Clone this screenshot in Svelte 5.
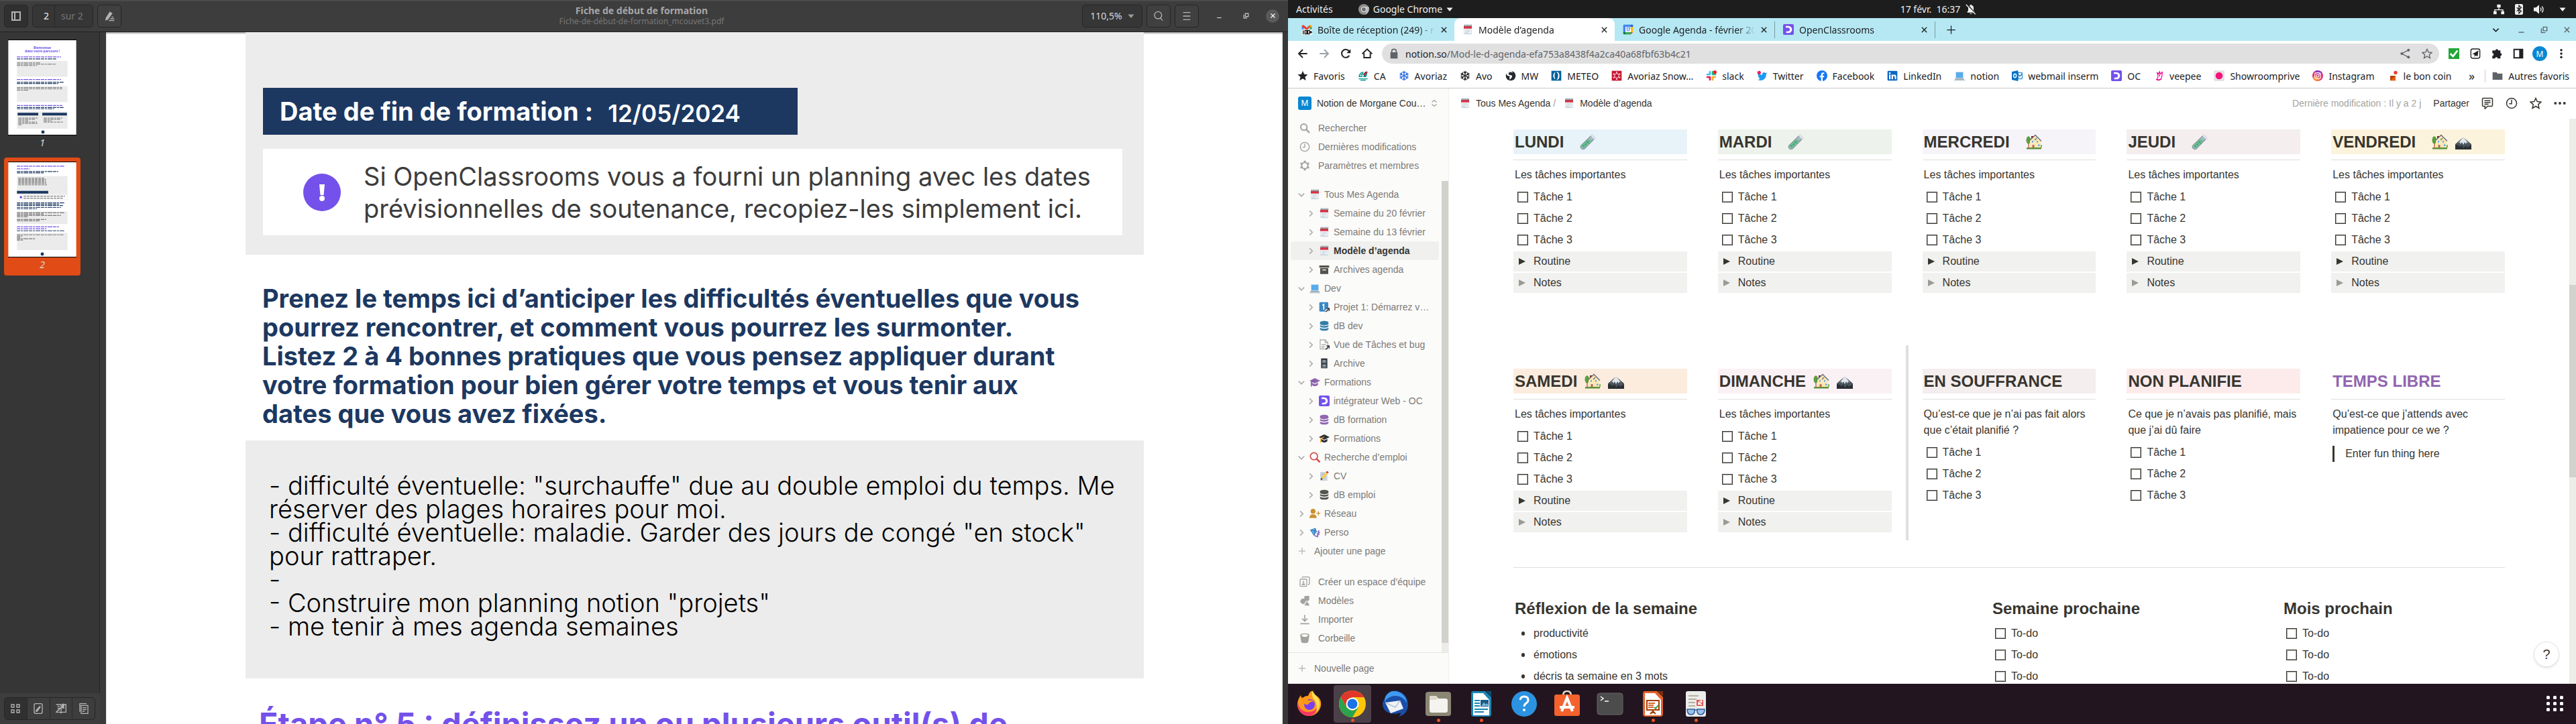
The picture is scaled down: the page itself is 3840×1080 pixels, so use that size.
<script lang="ts">
  const bookmarks = [
    { icon: 'starfull', label: 'Favoris' },
    { icon: 'ca', label: 'CA' },
    { icon: 'snow', label: 'Avoriaz' },
    { icon: 'snowdark', label: 'Avo' },
    { icon: 'globe', label: 'MW' },
    { icon: 'meteo', label: 'METEO' },
    { icon: 'avoriaz', label: 'Avoriaz Snow…' },
    { icon: 'slack', label: 'slack' },
    { icon: 'twitter', label: 'Twitter' },
    { icon: 'facebook', label: 'Facebook' },
    { icon: 'linkedin', label: 'LinkedIn' },
    { icon: 'laptop', label: 'notion' },
    { icon: 'outlook', label: 'webmail inserm' },
    { icon: 'oc', label: 'OC' },
    { icon: 'veepee', label: 'veepee' },
    { icon: 'showroom', label: 'Showroomprive' },
    { icon: 'instagram', label: 'Instagram' },
    { icon: 'lbc', label: 'le bon coin' },
  ];

  const tabs = [
    { icon: 'gmail', label: 'Boîte de réception (249) - morgane', active: false },
    { icon: 'calendar', label: 'Modèle d’agenda', active: true },
    { icon: 'gcal', label: 'Google Agenda - février 2023', active: false },
    { icon: 'oc', label: 'OpenClassrooms', active: false },
  ];

  const tree = [
    { level: 0, open: true, icon: 'calendar', label: 'Tous Mes Agenda' },
    { level: 1, open: false, icon: 'calendar', label: 'Semaine du 20 février' },
    { level: 1, open: false, icon: 'calendar', label: 'Semaine du 13 février' },
    { level: 1, open: false, icon: 'calendar', label: 'Modèle d’agenda', selected: true },
    { level: 1, open: false, icon: 'archive', label: 'Archives agenda' },
    { level: 0, open: true, icon: 'laptop', label: 'Dev' },
    { level: 1, open: false, icon: 'project', label: 'Projet 1: Démarrez votre formation' },
    { level: 1, open: false, icon: 'dbblue', label: 'dB dev' },
    { level: 1, open: false, icon: 'doclink', label: 'Vue de Tâches et bug' },
    { level: 1, open: false, icon: 'cabinet', label: 'Archive' },
    { level: 0, open: true, icon: 'cappurple', label: 'Formations' },
    { level: 1, open: false, icon: 'oc', label: 'intégrateur Web - OC' },
    { level: 1, open: false, icon: 'dbpurple', label: 'dB formation' },
    { level: 1, open: false, icon: 'capdark', label: 'Formations' },
    { level: 0, open: true, icon: 'loupered', label: 'Recherche d’emploi' },
    { level: 1, open: false, icon: 'memo', label: 'CV' },
    { level: 1, open: false, icon: 'dbdark', label: 'dB emploi' },
    { level: 0, open: false, icon: 'useradd', label: 'Réseau' },
    { level: 0, open: false, icon: 'kite', label: 'Perso' },
  ];

  const tasks = ['Tâche 1', 'Tâche 2', 'Tâche 3'];

  const week = [
    { id: 'lundi', name: 'LUNDI', tone: 'blue', emojis: ['tube'], wide: true },
    { id: 'mardi', name: 'MARDI', tone: 'green', emojis: ['tube'], wide: true },
    { id: 'mercredi', name: 'MERCREDI', tone: 'violet', emojis: ['house'], wide: true },
    { id: 'jeudi', name: 'JEUDI', tone: 'brown', emojis: ['tube'], wide: true },
    { id: 'vendredi', name: 'VENDREDI', tone: 'yellow', emojis: ['house', 'mount'], wide: true },
  ];

  const weekend = [
    { id: 'samedi', name: 'SAMEDI', tone: 'orange', emojis: ['house', 'mount'], intro: ['Les tâches importantes'], toggles: true },
    { id: 'dimanche', name: 'DIMANCHE', tone: 'pink', emojis: ['house', 'mount'], intro: ['Les tâches importantes'], toggles: true },
    { id: 'souffrance', name: 'EN SOUFFRANCE', tone: 'brown', emojis: [], intro: ['Qu’est-ce que je n’ai pas fait alors', 'que c’était planifié ?'], toggles: false },
    { id: 'nonplan', name: 'NON PLANIFIE', tone: 'red', emojis: [], intro: ['Ce que je n’avais pas planifié, mais', 'que j’ai dû faire'], toggles: false },
  ];

  const dock = [
    { icon: 'firefox', label: 'Firefox', running: false, active: false },
    { icon: 'chrome', label: 'Chrome', running: true, active: true },
    { icon: 'thunderbird', label: 'Thunderbird', running: false, active: false },
    { icon: 'files', label: 'Fichiers', running: true, active: false },
    { icon: 'writer', label: 'Writer', running: true, active: false },
    { icon: 'help', label: 'Aide', running: false, active: false },
    { icon: 'software', label: 'Logiciels', running: false, active: false },
    { icon: 'terminal', label: 'Terminal', running: false, active: false },
    { icon: 'impress', label: 'Impress', running: true, active: false },
    { icon: 'evince', label: 'Visionneur', running: true, active: false },
  ];

  const flakes = [0, 60, 120, 180, 240, 300];
  const thumbOne = [
    { y: 25, w: 66, c: '#7451eb' }, { y: 28, w: 60, c: '#1c3861' },
    { y: 59, w: 66, c: '#7451eb' }, { y: 63, w: 70, c: '#1c3861' }, { y: 65, w: 62, c: '#1c3861' },
    { y: 98, w: 68, c: '#7451eb' }, { y: 101, w: 70, c: '#1c3861' }, { y: 103, w: 56, c: '#1c3861' },
    { y: 34, w: 36, c: '#777' }, { y: 36, w: 58, c: '#777' }, { y: 38, w: 30, c: '#777' },
    { y: 71, w: 68, c: '#777' }, { y: 73, w: 68, c: '#777' }, { y: 75, w: 18, c: '#777' },
  ];
  const thumbTwo = [
    { y: 6, w: 71, c: '#7451eb' }, { y: 10, w: 19, c: '#7451eb' }, { y: 14, w: 62, c: '#1c3861' }, { y: 16, w: 40, c: '#1c3861' },
    { y: 61, w: 71, c: '#1c3861' }, { y: 63, w: 64, c: '#1c3861' }, { y: 65, w: 69, c: '#1c3861' }, { y: 68, w: 66, c: '#1c3861' }, { y: 70, w: 30, c: '#1c3861' },
    { y: 76, w: 71, c: '#777' }, { y: 78, w: 40, c: '#777' }, { y: 80, w: 66, c: '#777' }, { y: 82, w: 16, c: '#777' }, { y: 86, w: 44, c: '#777' }, { y: 88, w: 34, c: '#777' },
    { y: 97, w: 64, c: '#7451eb' }, { y: 100, w: 44, c: '#7451eb' }, { y: 103, w: 72, c: '#1c3861' },
    { y: 109, w: 70, c: '#777' }, { y: 111, w: 8, c: '#777' }, { y: 113, w: 6, c: '#777' }, { y: 115, w: 28, c: '#777' }, { y: 117, w: 9, c: '#777' },
  ];
</script>

{#snippet db(color: string)}
  <path fill={color} d="M12 1c5.500 0 9.500 1.500 9.500 3.700v2.600C21.500 9.500 17.500 11 12 11S2.500 9.500 2.500 7.300V4.700C2.500 2.500 6.500 1 12 1zM2.500 10c2 1.700 5.500 2.500 9.500 2.500s7.500-.8 9.500-2.500v2.500c0 2.200-4 4-9.500 4s-9.500-1.800-9.500-4zM2.500 16c2 1.700 5.500 2.500 9.500 2.500s7.500-.8 9.500-2.500v3c0 2.400-4 4-9.500 4s-9.500-1.600-9.500-4z" />
{/snippet}

{#snippet cap(main: string, tassel: string)}
  <path fill={main} d="M12 3 24 9l-12 6L0 9zM5 13l7 4 7-4v5c-2 2.500-4.500 3-7 3s-5-.5-7-3z" />
  <path stroke={tassel} stroke-width="2" fill="none" d="M12 9 4 12v10" />
{/snippet}

{#snippet icon(name: string)}
  <svg class="ic" viewBox="0 0 24 24" aria-hidden="true">
    {#if name === 'calendar'}
      <path fill="#ccd6dd" d="M3 5h18v15a3 3 0 0 1-3 3H6a3 3 0 0 1-3-3z" />
      <path fill="#f5f8fa" d="M4 10h16v10H4z" />
      <path fill="#ccd6dd" d="M6 12h12v2H6zM6 15h12v2H6zM6 18h7v2H6z" />
      <path fill="#dd2e44" d="M3 4h18v6H3z" />
      <path stroke="#66757f" stroke-width="1.500" d="M5 1v5M8 1v5M11 1v5M14 1v5M17 1v5M20 1v5" />
    {:else if name === 'gmail'}
      <path fill="#4285f4" d="M1 4h4v10H1z" /><path fill="#34a853" d="M19 4h4v10h-4z" />
      <path fill="#ea4335" d="m1 3 4-1 7 6 7-6 4 2-11 9L1 6z" /><path fill="#fbbc04" d="M19 2c3-1 4 1 4 3l-4 3z" />
      <path fill="#fff" d="M1 12h23v12H1z" />
      <path stroke="#111" stroke-width="2" fill="none" d="M4 14v9M8 14h4v8H8zM14 14h4v8h-4zM18 18h6M21 15v6" />
    {:else if name === 'gcal'}
      <path fill="#4285f4" d="M1 3q0-2 2-2h15v5H6v12H1z" /><path fill="#1967d2" d="M18 1h3q2 0 2 2v3h-5z" />
      <path fill="#fbbc04" d="M18 6h5v12h-5z" /><path fill="#34a853" d="M6 18h12v5H6z" />
      <path fill="#188038" d="M1 18h5v5H3q-2 0-2-2z" /><path fill="#ea4335" d="M18 18h5l-5 5z" /><path fill="#fff" d="M6 6h12v12H6z" />
      <path stroke="#4285f4" stroke-width="1.800" fill="none" d="m8 9 2-1v8M12 8h4l-3 8" />
    {:else if name === 'oc'}
      <rect width="24" height="24" rx="3" fill="#7451eb" />
      <path fill="#fff" d="M6 4h6a8 8 0 0 1 0 16H7v-4h4a4 4 0 0 0 0-8H6z" />
    {:else if name === 'starfull'}
      <path fill="#202124" d="m12 1 3.200 7.500 8 .7-6.100 5.300 1.900 7.900-7-4.200-7 4.200 1.900-7.900L.8 9.200l8-.7z" />
    {:else if name === 'ca'}
      <path fill="#00958f" d="M2 15q1-12 11-12L10 15zM12 15l4-12h6l-3 12z" /><path fill="#d4142a" d="m12 8 8-6 2 2-8 8z" />
      <path stroke="#fff" stroke-width="1.500" fill="none" d="M10 6q-5 1-4 7l5-3" /><path stroke="#00958f" stroke-width="2" d="M2 19h20M6 22h12" />
    {:else if name === 'snow' || name === 'snowdark'}
      {#each flakes as a}
        <path transform="rotate({a} 12 12)" stroke={name === 'snow' ? '#2f6fe4' : '#222'} stroke-width="2" fill="none" d="M12 12V1M8.500 3l3.500 3.500L15.500 3" />
      {/each}
    {:else if name === 'globe'}
      <circle cx="12" cy="12" r="11" fill="#26282c" /><path fill="#fff" d="M17 5q-9-3-10 2 0 3 6 4 4 1 1 5-2 3-4 5l-1-6 2-2-6-1-3-4 1-3q4-6 12-3z" />
    {:else if name === 'meteo'}
      <path fill="#00609c" d="M1 1h22v22H1z" /><path fill="#fff" d="M12 3q7 0 7 9t-7 9q4-3 4-9t-4-9zM10 4q-5 2-5 8t5 8q-2-3-2-8t2-8z" />
    {:else if name === 'avoriaz'}
      <path fill="#c8102e" d="M1 1h22v22H1z" /><circle cx="12" cy="12" r="5" fill="none" stroke="#fff" stroke-width="1.300" />
      {#each flakes as a}<path transform="rotate({a} 12 12)" stroke="#fff" stroke-width="1.300" d="M12 7V3M10 4h4" />{/each}
    {:else if name === 'slack'}
      <g stroke-width="4" stroke-linecap="round" fill="none"><path stroke="#36c5f0" d="M9 3v6M3 9h6" /><path stroke="#2eb67d" d="M15 3v6M15 9h6" /><path stroke="#ecb22e" d="M15 15h6M15 15v6" /><path stroke="#e01e5a" d="M3 15h6M9 15v6" /></g>
      <circle cx="20" cy="4" r="4" fill="#e8262d" />
    {:else if name === 'twitter'}
      <path fill="#1d9bf0" d="M23 6.500c-.9.400-1.700.6-2.600.8q1.400-1 2-2.500-1.300.8-2.900 1.100a4.500 4.500 0 0 0-7.700 4.100Q6.200 9.700 2.600 5.500c-1.300 2.300-.6 4.800 1.400 6L2 11c0 2.200 1.500 4 3.600 4.500l-2 .1c.6 1.800 2.200 3 4.200 3.100A9 9 0 0 1 1 20.500C12 26 21 19 20.700 9z" />
      <circle cx="5" cy="5" r="4" fill="#e91e63" />
    {:else if name === 'facebook'}
      <circle cx="12" cy="12" r="12" fill="#1877f2" /><path fill="#fff" d="M10 24v-8.500H7V12h3V9.500Q10 5 14.500 5H17v3h-1.700Q13.500 8 13.500 10v2H17l-.6 3.500h-2.900V24z" />
    {:else if name === 'linkedin'}
      <rect x="1" y="1" width="22" height="22" rx="2" fill="#0a66c2" /><path fill="#fff" d="M4.500 9.500h3.300V20H4.500zM4.300 4.500h3.600v3.400H4.300zM10 9.500h3.200v1.600q1-1.800 3.300-1.800 4 0 4 4.700v6h-3.300v-5.500q0-2.300-1.800-2.300-2 0-2 2.500V20H10z" />
    {:else if name === 'laptop'}
      <rect x="3" y="3" width="18" height="15" rx="1" fill="#ccd6dd" /><path fill="#55acee" d="M4.500 4.500h15v12h-15z" /><path fill="#99aab5" d="m3 18-3 5h24l-3-5z" /><path fill="#ccd6dd" d="M1 21h22v2H1z" />
    {:else if name === 'outlook'}
      <path fill="#0072c6" d="M0 3 14 0v24L0 21z" /><path fill="#fff" stroke="#0072c6" stroke-width="1.500" d="M14 5h9v14h-9z" /><path d="m15 10 3 3 5-5" stroke="#0072c6" stroke-width="2" fill="none" />
      <ellipse cx="7" cy="12" rx="3" ry="4" fill="none" stroke="#fff" stroke-width="2.200" />
    {:else if name === 'veepee'}
      <path fill="none" stroke="#ec008c" stroke-width="1.800" d="M8 4c3 6 3 12 0 16 5 3 10 0 11-6l1-10-5 4-1-5-3 5zM14 8v6" /><path stroke="#ec008c" stroke-width="1.800" d="M6 20q6 4 12-1" fill="none" />
    {:else if name === 'showroom'}
      <rect width="24" height="24" rx="3" fill="#e3e3e3" /><circle cx="12" cy="12" r="8" fill="#f9127b" />
    {:else if name === 'instagram'}
      <circle cx="12" cy="12" r="12" fill="#e1306c" /><path fill="#fd8d32" d="M1 16a12 12 0 0 0 17 6L6 12z" /><path fill="#8a3ac8" d="M5 2a12 12 0 0 1 17 4L12 9z" />
      <rect x="5.500" y="5.500" width="13" height="13" rx="4" stroke="#fff" stroke-width="1.700" fill="none" /><circle cx="12" cy="12" r="3" stroke="#fff" stroke-width="1.700" fill="none" /><circle cx="15.700" cy="8.300" r="1" fill="#fff" />
    {:else if name === 'lbc'}
      <path fill="#ec6113" d="M6 12h12v11H6z" /><path fill="#8a3708" d="m18 12-12 11V12z" opacity=".6" /><circle cx="18" cy="5" r="4" fill="#e63c2e" />
    {:else if name === 'folder'}
      <path fill="#5f6368" d="M1 4h9l2 3h11v14H1z" />
    {:else if name === 'archive'}
      <path fill="#55534e" d="M1 3h22v5H1zM3 9h18v13H3z" /><path fill="#fbfbfa" d="M8 12h8v2H8z" />
    {:else if name === 'project'}
      <rect x="1" y="1" width="20" height="21" rx="2" fill="#3b88c3" /><path stroke="#fff" stroke-width="2.500" fill="none" d="m8 8 3-2v12" /><path stroke="#fff" stroke-width="5" d="m15 22 8-8" /><path stroke="#333" stroke-width="2" fill="none" d="m15 23 7-7M17 15h6v6" />
    {:else if name === 'dbblue'}{@render db('#337ea9')}
    {:else if name === 'dbpurple'}{@render db('#9065b0')}
    {:else if name === 'dbdark'}{@render db('#55534e')}
    {:else if name === 'doclink'}
      <path fill="#fff" stroke="#b0aeaa" stroke-width="2" d="M3 1.500h11l6 6V22H3zM14 1.500v6h6" /><path stroke="#b0aeaa" stroke-width="2" d="M6 12h10M6 16h8M6 19h6" /><path stroke="#333" stroke-width="2" fill="none" d="m15 23 7-7M17 15h6v6" />
    {:else if name === 'cabinet'}
      <path fill="#292f33" d="M5 1h14v22H5z" /><path fill="#66757f" d="M7 4h10v8H7zM7 14h10v8H7z" /><path fill="#ccd6dd" d="M10 6h4v2h-4zM10 16h4v2h-4z" />
    {:else if name === 'cappurple'}{@render cap('#9065b0', '#7b529b')}
    {:else if name === 'capdark'}{@render cap('#292f33', '#ffac33')}
    {:else if name === 'loupered'}
      <circle cx="10" cy="10" r="8" fill="none" stroke="#d44c47" stroke-width="2.500" /><path stroke="#d44c47" stroke-width="4" stroke-linecap="round" d="m16 16 6 6" />
    {:else if name === 'memo'}
      <path fill="#ccd6dd" d="M3 3h16v20H3z" /><path stroke="#99aab5" d="M5 8h10M5 12h10M5 16h10" /><path stroke="#ffcc4d" stroke-width="5" d="m7 18 11-13" /><path fill="#292f33" d="m4 21 1-5 4 3z" /><path stroke="#dd2e44" stroke-width="5" d="m18 5 2-3" />
    {:else if name === 'useradd'}
      <circle cx="8" cy="7" r="5.500" fill="#cb912f" /><path fill="#cb912f" d="M0 22q0-8 8-8t8 8z" /><path stroke="#cb912f" stroke-width="2" d="M20 7v9M15.500 11.500h9" />
    {:else if name === 'kite'}
      <path fill="#55acee" stroke="#226699" d="m2 7 11-4 3 7-6 9z" /><path stroke="#226699" d="m2 7 14 3M13 3l-3 16" /><path fill="none" stroke="#9266cc" stroke-width="2.500" d="m11 19 7 3v-4l3-1-3-2 4-2-3-2 3-3" />
    {:else if name === 'search'}
      <circle cx="10" cy="10" r="7" fill="none" stroke="currentColor" stroke-width="3" /><path stroke="currentColor" stroke-width="3.500" stroke-linecap="round" d="m15.500 15.500 6 6" />
    {:else if name === 'clock'}
      <circle cx="12" cy="12" r="10" fill="none" stroke="currentColor" stroke-width="2" /><path fill="none" stroke="currentColor" stroke-width="2" d="M12 5v8H7" />
    {:else if name === 'gear'}
      <circle cx="12" cy="12" r="7" fill="none" stroke="currentColor" stroke-width="3" />
      {#each flakes as a}<path transform="rotate({a} 12 12)" stroke="currentColor" stroke-width="4" d="M12 5V1" />{/each}
    {:else if name === 'team'}
      <rect x="1.500" y="6" width="15" height="16" rx="2" fill="none" stroke="currentColor" stroke-width="2" /><path fill="none" stroke="currentColor" stroke-width="2" d="M6 3q0-2 2-2h12q2.500 0 2.500 2v13q0 2-3 2" /><circle cx="9" cy="12" r="2" fill="currentColor" /><path fill="currentColor" d="M5 19q0-4 4-4t4 4z" />
    {:else if name === 'templates'}
      <path fill="currentColor" d="m11 2 11-1v10l-4 2-3-1-3 6a6 6 0 1 1-1-10zM17 13l6 10H11z" />
    {:else if name === 'import'}
      <path fill="none" stroke="currentColor" stroke-width="2.500" d="M12 2v13M6 10l6 6 6-6M2 21.500h20" />
    {:else if name === 'trash'}
      <path fill="currentColor" fill-rule="evenodd" d="M2 5q0-4 10-4t10 4v3l-2 12q-1 3-8 3t-8-3L2 8zm3 1q1 3 7 3t7-3-7-3-7 3z" />
    {:else if name === 'plus'}
      <path stroke="currentColor" stroke-width="2" d="M12 2v20M2 12h20" />
    {:else if name === 'updown'}
      <path fill="none" stroke="currentColor" stroke-width="2.200" d="m5 9 7-6 7 6M5 15l7 6 7-6" />
    {:else if name === 'chevdown'}
      <path fill="none" stroke="currentColor" stroke-width="3.500" d="m3 8 9 9 9-9" />
    {:else if name === 'chevright'}
      <path fill="none" stroke="currentColor" stroke-width="3.500" d="m8 3 9 9-9 9" />
    {:else if name === 'close'}
      <path stroke="currentColor" stroke-width="3" d="m4 4 16 16M20 4 4 20" />
    {:else if name === 'minimize'}
      <path stroke="currentColor" stroke-width="3" d="M3 20h18" />
    {:else if name === 'restore'}
      <path fill="none" stroke="currentColor" stroke-width="3" d="M9 3h12v12H9zM3 7v14h13" />
    {:else if name === 'arrowleft'}
      <path fill="none" stroke="currentColor" stroke-width="2.800" d="M22 12H3M12 3l-9 9 9 9" />
    {:else if name === 'arrowright'}
      <path fill="none" stroke="currentColor" stroke-width="2.800" d="M2 12h19M12 3l9 9-9 9" />
    {:else if name === 'reload'}
      <path fill="none" stroke="currentColor" stroke-width="3" d="M20 16a9 9 0 1 1-1-10l2 3" /><path fill="currentColor" d="M23 2v9h-9z" />
    {:else if name === 'home'}
      <path fill="none" stroke="currentColor" stroke-width="2.800" d="M5 11v10h14V11M1 12.500 12 2l11 10.500" />
    {:else if name === 'lock'}
      <path fill="currentColor" d="M4 9h16v14H4z" /><path fill="none" stroke="currentColor" stroke-width="2.500" d="M7 10V6q0-4 5-4t5 4v4" />
    {:else if name === 'share'}
      <path fill="none" stroke="currentColor" stroke-width="2" d="M20 4 5 12l15 8" /><circle cx="20" cy="4" r="3" fill="currentColor" /><circle cx="5" cy="12" r="3" fill="currentColor" /><circle cx="20" cy="20" r="3" fill="currentColor" />
    {:else if name === 'star'}
      <path fill="none" stroke="currentColor" stroke-width="2" d="m12 2 3 6.800 7.500.7-5.600 5 1.700 7.500-6.600-4-6.600 4L7 14.500l-5.600-5L9 8.800z" />
    {:else if name === 'check'}
      <path fill="#21a637" d="M0 0h24v24H0z" /><path fill="none" stroke="#fff" stroke-width="4" d="m4 12 6 6L20 5" />
    {:else if name === 'send'}
      <rect x="2" y="1.500" width="20" height="21" rx="4" fill="none" stroke="#202124" stroke-width="2" /><path fill="#202124" d="M19 5 5 13l5 1v5l3-3 4 2z" />
    {:else if name === 'puzzle'}
      <path fill="currentColor" d="M9 5a3 3 0 1 1 6 0h5v6a3 3 0 1 1 0 6v6h-6a3 3 0 1 0-6 0H2v-6a3 3 0 1 0 0-6V5z" />
    {:else if name === 'panel'}
      <path fill="none" stroke="currentColor" stroke-width="3" d="M2.500 2.500h19v19h-19z" /><path fill="currentColor" d="M14 2h8v20h-8z" />
    {:else if name === 'kebab'}
      <circle cx="12" cy="4" r="2.600" fill="currentColor" /><circle cx="12" cy="12" r="2.600" fill="currentColor" /><circle cx="12" cy="20" r="2.600" fill="currentColor" />
    {:else if name === 'dots'}
      <circle cx="3" cy="12" r="2.600" fill="currentColor" /><circle cx="12" cy="12" r="2.600" fill="currentColor" /><circle cx="21" cy="12" r="2.600" fill="currentColor" />
    {:else if name === 'comment'}
      <path fill="none" stroke="currentColor" stroke-width="2" d="M4 2h16q2 0 2 2v12q0 2-2 2h-8l-5 5v-5H4q-2 0-2-2V4q0-2 2-2zM6 7h12M6 10.500h12M6 14h8" />
    {:else if name === 'network'}
      <path fill="currentColor" d="M8 1h8v7H8zM0 16h7v7H0zM17 16h7v7h-7z" /><path fill="none" stroke="currentColor" stroke-width="2" d="M12 8v5M3 17v-4h18v4" />
    {:else if name === 'bluetooth'}
      <rect x="3" width="18" height="24" rx="3" fill="currentColor" /><path fill="none" stroke="#1d1d1d" stroke-width="2" d="m7 8 10 8-5 5V3l5 5-10 8" />
    {:else if name === 'volume'}
      <path fill="currentColor" d="M0 8h5l7-6v20l-7-6H0z" /><path fill="none" stroke="currentColor" stroke-width="2" d="M15 8q3 4 0 8M18.500 5q5 7 0 14" />
    {:else if name === 'caret'}
      <path fill="currentColor" d="M1 6h22L12 19z" />
    {:else if name === 'bell'}
      <path fill="currentColor" d="M4 19v-2l2-2V9q0-6 5-6.500V1h2v1.500Q18 3 18 9v6l2 2v2zM9 21h6l-3 2z" /><path stroke="#1d1d1d" stroke-width="3" d="m4 1 18 21" /><path stroke="currentColor" stroke-width="2" d="m1 1 21 22" />
    {:else if name === 'chromegray'}
      <circle cx="12" cy="12" r="12" fill="#8d8d8d" /><path fill="#bdbdbd" d="M12 6h11q3 12-8 18l4-12z" /><circle cx="12" cy="12" r="6" fill="#eee" /><circle cx="12" cy="12" r="4.500" fill="#6f6f6f" />
    {:else if name === 'sidebar'}
      <path fill="none" stroke="currentColor" stroke-width="3" d="M3 3h18v18H3zM9 3v18" />
    {:else if name === 'annotate'}
      <path fill="currentColor" d="m13 2 6 4L9 20l-6 2 1-6z" /><path stroke="currentColor" stroke-width="2" d="M17 14h4M14 18h9M11 22h12" />
    {:else if name === 'loupe'}
      <circle cx="11" cy="10" r="8" fill="none" stroke="currentColor" stroke-width="2" /><path stroke="currentColor" stroke-width="2" d="m16 16 5 6" />
    {:else if name === 'menu'}
      <path stroke="currentColor" stroke-width="2" d="M4 4h16M4 12h16M4 20h16" />
    {:else if name === 'grid'}
      <path fill="none" stroke="currentColor" stroke-width="2" d="M3 3h6v6H3zM15 3h6v6h-6zM3 15h6v6H3zM15 15h6v6h-6z" />
    {:else if name === 'note'}
      <rect x="3" y="1" width="18" height="22" rx="3" fill="none" stroke="currentColor" stroke-width="2" /><path fill="currentColor" d="m15 6 3 2-8 11-4 1 1-5z" />
    {:else if name === 'book'}
      <path fill="none" stroke="currentColor" stroke-width="2" d="M1 3h9l2 1 2-1M19 3h4v17h-9l-2 2-2-2H1zM12 4v17M4 7h5M4 11h5M4 15h5" /><path fill="currentColor" d="M14 1h5v12l-2.500-2L14 13z" />
    {:else if name === 'pages'}
      <path fill="none" stroke="currentColor" stroke-width="2" d="M6 5h15v18H6zM3 19V1h15M9 10h9M9 14h9M9 18h5" />
    {/if}
  </svg>
{/snippet}

{#snippet emoji(name: string)}
  <svg class="emoji" viewBox="0 0 24 24" aria-hidden="true">
    {#if name === 'tube'}
      <path fill="#aebcc6" stroke="#8899a6" stroke-width="1.500" d="M18 1.500 22.500 6 7.500 21.500q-2.500 2-5 0-2.500-2.500 0-5z" />
      <path fill="#5fc08a" d="M12 8.500h6L7 20q-2 1.500-3.500 0-1.500-1.700 0-3.500z" /><path stroke="#e1e8ed" stroke-width="2.500" d="m17 1.500 5.500 5.500" />
      <path fill="#2f8a55" d="M11 11h1.500v1.500H11zM8 15h1.500v1.500H8zM13 13h1v1h-1zM5 17.500h1.500V19H5zM9 12.500h1v1H9z" />
    {:else if name === 'house'}
      <path fill="#5c913b" d="M1 20h22v2.500H1z" /><path stroke="#c1694f" stroke-width="1.500" d="M4 12v9" /><ellipse cx="3.800" cy="9" rx="3.300" ry="5.800" fill="#5c9e3f" /><circle cx="23" cy="18" r="2" fill="#77b255" />
      <path fill="#a0041e" d="M8 3h3v4H8z" /><path fill="#ffe8b6" d="M6 9l7-7 9 8v10H6z" /><path fill="none" stroke="#66757f" stroke-width="1.500" d="m5 10 9-8.500 9 9M13 9l3-3" />
      <path fill="#55acee" d="M9 10h2v2.500H9zM16 10h2v2.500h-2zM18 15.500h2.500V18H18z" /><path fill="#c1694f" d="M9.500 16h3v4h-3z" />
    {:else if name === 'mount'}
      <path fill="#4b545d" d="M0 15 8 8l4-3 5 4 7 6v8H0z" /><path fill="#e1e8ed" d="m4 14 8-9.500L20 14l-3-2-1 3-2-3-2 4-2-4-2 3-1-3z" /><path fill="#292f33" d="m0 16 5 1 2 2 3-3 2 5 4-4 2 3 6-4v7H0z" />
    {/if}
  </svg>
{/snippet}

{#snippet app(name: string)}
  <svg class="app-ic" viewBox="0 0 40 40" aria-hidden="true">
    {#if name === 'firefox'}
      <path fill="#ff9a1f" d="M20 3c6-6 6 2 9 4 7 4 9 9 8 16-2 8-8 15-17 15S2 31 2 21c0-5 2-10 5-14l1 4c3-1 8-3 12-8z" />
      <path fill="#22151f" d="M8 0h15c-3 3-4 5-5 8-4 0-6 1-8 3z" />
      <path fill="#ffde4f" d="M25 0c0 6 9 8 10 18 1 9-4 14-9 16 6-6 6-14 2-19-3-3-6-8-3-15z" />
      <path fill="#fb3a60" d="M3 17c0 8 6 15 15 15 7 0 11-3 13-6 0 6-5 12-12 12C9 38 1 30 3 17z" />
      <circle cx="20" cy="21" r="8" fill="#7a3df0" /><path fill="#ff980e" d="M8 13c4-3 8-1 11 2 3-1 6 0 7 2-4-1-6 1-8 4-5 1-9-3-10-8z" />
    {:else if name === 'chrome'}
      <circle cx="20" cy="20" r="20" fill="#fdc60a" /><path fill="#e1372b" d="M2.700 10A20 20 0 0 1 37.300 10H20L11 25z" /><path fill="#2ba24c" d="M2.700 10A20 20 0 0 0 20 40l9-15-9 5-9-5z" />
      <circle cx="20" cy="20" r="9.500" fill="#fff" /><circle cx="20" cy="20" r="7.500" fill="#1a73e8" />
    {:else if name === 'thunderbird'}
      <path fill="#1a4fa8" d="M14 1c12-3 25 5 25 20 0 9-5 16-14 18 2-2 3-4 3-6C14 38 1 32 1 20c0-3 1-5 3-7 0-4 4-9 10-12z" />
      <path fill="#3f9af0" d="M17 1c12 0 20 8 20 18-3-7-9-11-17-11-7 0-13 4-16 9C4 8 9 2 17 1z" /><path fill="#eef2f7" d="m5 18 22-3 5 12-19 7z" /><path fill="none" stroke="#b4c2d4" stroke-width="1.500" d="m5 18 15 7 7-10" />
    {:else if name === 'files'}
      <rect x="1" y="2" width="38" height="36" rx="4" fill="#8b8775" /><path fill="#f5f3ee" d="M7 10q0-2 2-2h8l3 4h11q3 0 3 3v15q0 3-3 3H10q-3 0-3-3z" /><path fill="#ded9cc" d="M7 10q0-2 2-2h8l2 3-2 3H7z" />
    {:else if name === 'writer' || name === 'impress'}
      <path fill={name === 'writer' ? '#1a85b5' : '#e2622a'} d="M8 1h18l9 9v25q0 4-4 4H9q-4 0-4-4V5q0-4 3-4z" /><path fill={name === 'writer' ? '#0b4f77' : '#7d2d0e'} d="M27 1h8v8z" /><path fill="#fff" d="M8 4h15l9 10v23H8z" />
      {#if name === 'writer'}
        <path stroke="#1a85b5" stroke-width="2" d="M10 15h8M10 19h8M10 23h8M10 28h20M10 32h14" /><path fill="#1b5c88" d="M19 14h12v10H19z" /><path fill="#7db9e0" d="m20 23 4-5 3 3 2-2 2 4z" />
      {:else}
        <path fill="#fff" stroke="#a33e03" stroke-width="2" d="M11 15h18v14H11zM20 29v5M16 35l4-4 4 4" /><path stroke="#d4672f" stroke-width="2" d="M13 19h10M13 22h8M13 25h8" /><path stroke="#3b9a3b" stroke-width="2" fill="none" d="m22 25 2 2 4-5" />
      {/if}
    {:else if name === 'help'}
      <circle cx="20" cy="20" r="19" fill="#2b93e0" /><path fill="none" stroke="#fff" stroke-width="3" d="M14 14q1-5 6-5 6 0 6 5 0 3-3 5t-3 5" /><circle cx="20" cy="29" r="2" fill="#fff" />
    {:else if name === 'software'}
      <path fill="none" stroke="#e8d9c6" stroke-width="2.500" d="M14 8q0-7 6-7t6 7" /><rect x="1" y="6" width="38" height="32" rx="3" fill="#f4622d" /><path fill="none" stroke="#fff" stroke-width="4" d="m12 31 8-20 8 20M9 25h22" />
    {:else if name === 'terminal'}
      <rect x="1" y="4" width="38" height="32" rx="4" fill="#4c4c4c" stroke="#666" /><path stroke="#fff" stroke-width="1.500" fill="none" d="m6 9 4 3-4 3M12 16h6" />
    {:else if name === 'evince'}
      <rect x="5" y="1" width="30" height="38" rx="3" fill="#ececea" /><path stroke="#b7b09f" stroke-width="2" d="M9 8h15M9 13h12M9 18h10M9 23h10" /><path fill="#e05353" d="M21 14h10v9H21z" /><path fill="none" stroke="#fff" stroke-width="1.500" d="M23 21q6-3 6-5t-4 1 4 4" />
      <path fill="#9dc0ea" stroke="#2c5d9e" stroke-width="1.500" d="M7 28h11q1 8-5 8t-6-8zM22 28h11q0 8-6 8t-5-8zM18 29h4" />
    {/if}
  </svg>
{/snippet}

{#snippet thumbLine(l: { y: number; w: number; c: string })}
  <path stroke={l.c} stroke-width="1.200" stroke-dasharray="5 1 3 1 7 1" d="M13 {l.y}h{l.w}" />
{/snippet}

{#snippet todo(id: string, label: string)}
  <label class="todo" for={id}><input type="checkbox" {id} /><span>{label}</span></label>
{/snippet}

{#snippet toggles()}
  <button class="toggle"><svg viewBox="0 0 10 10" aria-hidden="true"><path d="M0 0l10 5-10 5z" /></svg>Routine</button>
  <button class="toggle empty"><svg viewBox="0 0 10 10" aria-hidden="true"><path d="M0 0l10 5-10 5z" /></svg>Notes</button>
{/snippet}

<div class="desktop">
  <section class="viewer">
    <header class="vhead">
      <div class="vleft">
        <button class="vbtn pressed" aria-label="Panneau latéral">{@render icon('sidebar')}</button>
        <div class="pager"><input aria-label="Page" value="2" /><span>sur 2</span></div>
        <button class="vbtn" aria-label="Annoter">{@render icon('annotate')}</button>
      </div>
      <div class="vtitle">
        <h1>Fiche de début de formation</h1>
        <p>Fiche-de-début-de-formation_mcouvet3.pdf</p>
      </div>
      <div class="vright">
        <button class="zoom">110,5% {@render icon('caret')}</button>
        <button class="vbtn" aria-label="Rechercher">{@render icon('loupe')}</button>
        <button class="vbtn" aria-label="Menu">{@render icon('menu')}</button>
        <div class="vwin">
          <button aria-label="Réduire">{@render icon('minimize')}</button>
          <button aria-label="Restaurer">{@render icon('restore')}</button>
          <button class="vclose" aria-label="Fermer">{@render icon('close')}</button>
        </div>
      </div>
    </header>
    <div class="vbody">
      <aside class="thumbs">
        <div class="thumblist">
          <button class="thumb">
            <svg viewBox="0 0 102 142" aria-hidden="true">
              <path fill="#fff" d="M0 0h102v142H0z" />
              <text x="51" y="13" class="tt">Bienvenue</text>
              <text x="51" y="18" class="tt">dans votre parcours !</text>
              <path fill="#ebebeb" d="M13 31h76v24H13zM13 69h76v24H13zM13 107h76v26H13z" />
              {#each thumbOne as l}{@render thumbLine(l)}{/each}
              <path fill="#1c3861" d="M14 109h31v4H14zM51 109h37v4H51z" />
              <path stroke="#888" stroke-width="1.200" stroke-dasharray="5 1 3 1" d="M15 117h30M15 119h26M15 121h16M15 123h28M15 125h30M15 127h6M53 117h28M53 119h26M53 121h12M53 123h30" />
              <circle cx="52" cy="138" r="2.500" fill="#1c3861" />
            </svg>
            <span>1</span>
          </button>
          <button class="thumb current">
            <svg viewBox="0 0 102 142" aria-hidden="true">
              <path fill="#fff" d="M0 0h102v142H0z" />
              <path fill="#ebebeb" d="M13 21h76v36H13zM13 74h76v19H13zM13 106h76v26H13z" />
              <path fill="#1c3861" d="M13 43h47v4H13z" /><path fill="#fff" d="M13 49h75v7H13z" />
              {#each thumbTwo as l}{@render thumbLine(l)}{/each}
              <path stroke="#777" stroke-width="1.200" stroke-dasharray="4 1" d="M15 24h40M15 26h42M15 28h41M15 30h42M15 32h42M15 34h43M23 51h62M23 54h60" />
              <circle cx="19" cy="52.500" r="1.800" fill="#7451eb" /><circle cx="51" cy="138" r="2.500" fill="#1c3861" />
            </svg>
            <span>2</span>
          </button>
        </div>
        <div class="thumbbar">
          <div class="seg">
            <button class="pressed" aria-label="Vignettes">{@render icon('grid')}</button>
            <button aria-label="Annotations">{@render icon('note')}</button>
            <button aria-label="Signets">{@render icon('book')}</button>
            <button aria-label="Plan">{@render icon('pages')}</button>
          </div>
        </div>
      </aside>
      <article class="page">
        <div class="panel first">
          <div class="banner"><span>Date de fin de formation :</span><b>12/05/2024</b></div>
          <div class="notice">
            <svg viewBox="0 0 56 56" aria-hidden="true"><circle cx="28" cy="28" r="28" fill="#7451eb" /><path fill="#fff" d="M24 16h8l-1.500 16h-5z" /><circle cx="28" cy="37" r="4" fill="#fff" /></svg>
            <p>Si OpenClassrooms vous a fourni un planning avec les dates<br />prévisionnelles de soutenance, recopiez-les simplement ici.</p>
          </div>
        </div>
        <p class="question">Prenez le temps ici d’anticiper les difficultés éventuelles que vous<br />pourrez rencontrer, et comment vous pourrez les surmonter.<br />Listez 2 à 4 bonnes pratiques que vous pensez appliquer durant<br />votre formation pour bien gérer votre temps et vous tenir aux<br />dates que vous avez fixées.</p>
        <div class="panel answer">
          <p>- difficulté éventuelle: "surchauffe" due au double emploi du temps. Me<br />réserver des plages horaires pour moi.<br />- difficulté éventuelle: maladie. Garder des jours de congé "en stock"<br />pour rattraper.<br />-<br />- Construire mon planning notion "projets"<br />- me tenir à mes agenda semaines</p>
        </div>
        <h2>Étape n° 5 : définissez un ou plusieurs outil(s) de</h2>
      </article>
    </div>
  </section>

  <section class="screen">
    <header class="topbar">
      <div class="tleft"><button>Activités</button><button class="appmenu">{@render icon('chromegray')}Google Chrome{@render icon('caret')}</button></div>
      <div class="clock"><span>17 févr.&nbsp; 16:37</span>{@render icon('bell')}</div>
      <div class="tray">{@render icon('network')}{@render icon('bluetooth')}{@render icon('volume')}{@render icon('caret')}</div>
    </header>

    <div class="tabbar">
      {#each tabs as t}
        <div class="tab" class:active={t.active}>
          {@render icon(t.icon)}<span>{t.label}</span><button aria-label="Fermer l’onglet">{@render icon('close')}</button>
        </div>
      {/each}
      <button class="newtab" aria-label="Nouvel onglet">{@render icon('plus')}</button>
      <div class="winctl">
        <button class="dark" aria-label="Rechercher des onglets">{@render icon('chevdown')}</button>
        <button aria-label="Réduire">{@render icon('minimize')}</button>
        <button aria-label="Restaurer">{@render icon('restore')}</button>
        <button aria-label="Fermer">{@render icon('close')}</button>
      </div>
    </div>

    <div class="toolbar">
      <div class="nav">
        <button aria-label="Retour">{@render icon('arrowleft')}</button>
        <button class="off" aria-label="Avancer">{@render icon('arrowright')}</button>
        <button aria-label="Actualiser">{@render icon('reload')}</button>
        <button aria-label="Accueil">{@render icon('home')}</button>
      </div>
      <div class="omni">
        {@render icon('lock')}
        <div class="url">notion.so<span>/Mod-le-d-agenda-efa753a8438f4a2ca40a68fbf63b4c21</span></div>
        <button aria-label="Partager">{@render icon('share')}</button>
        <button aria-label="Ajouter aux favoris">{@render icon('star')}</button>
      </div>
      <div class="exts">
        <button aria-label="Validation">{@render icon('check')}</button>
        <button aria-label="Envoyer">{@render icon('send')}</button>
        <button aria-label="Extensions">{@render icon('puzzle')}</button>
        <button aria-label="Panneau">{@render icon('panel')}</button>
        <button class="me" aria-label="Profil">M</button>
        <button aria-label="Menu">{@render icon('kebab')}</button>
      </div>
    </div>

    <nav class="bookmarks">
      {#each bookmarks as b}
        <a href="#{b.icon}">{@render icon(b.icon)}{b.label}</a>
      {/each}
      <button class="more">»</button>
      <a class="others" href="#autres">{@render icon('folder')}Autres favoris</a>
    </nav>

    <div class="notion">
      <aside class="side">
        <button class="workspace"><span class="badge">M</span><b>Notion de Morgane Couvet</b>{@render icon('updown')}</button>
        <div class="quick">
          <a href="#search">{@render icon('search')}Rechercher</a>
          <a href="#recent">{@render icon('clock')}Dernières modifications</a>
          <a href="#settings">{@render icon('gear')}Paramètres et membres</a>
        </div>
        <div class="scroller">
          <div class="treelist">
            {#each tree as n}
              <a class="node" class:sub={n.level === 1} class:selected={n.selected} href="#page">
                <span class="chev">{@render icon(n.open ? 'chevdown' : 'chevright')}</span>
                <span class="nic">{@render icon(n.icon)}</span>
                <span class="nlabel">{n.label}</span>
              </a>
            {/each}
            <button class="add">{@render icon('plus')}Ajouter une page</button>
            <div class="quick tools">
              <a href="#team">{@render icon('team')}Créer un espace d’équipe</a>
              <a href="#templates">{@render icon('templates')}Modèles</a>
              <a href="#import">{@render icon('import')}Importer</a>
              <a href="#trash">{@render icon('trash')}Corbeille</a>
            </div>
          </div>
          <div class="sbar"><i></i></div>
        </div>
        <button class="add newpage">{@render icon('plus')}Nouvelle page</button>
      </aside>

      <main>
        <div class="crumbs">
          <a href="#all">{@render icon('calendar')}Tous Mes Agenda</a><span class="slash">/</span><a href="#model">{@render icon('calendar')}Modèle d’agenda</a>
          <div class="acts">
            <span>Dernière modification : Il y a 2 j</span>
            <button>Partager</button>
            <button aria-label="Commentaires">{@render icon('comment')}</button>
            <button aria-label="Historique">{@render icon('clock')}</button>
            <button aria-label="Favori">{@render icon('star')}</button>
            <button aria-label="Plus">{@render icon('dots')}</button>
          </div>
        </div>
        <div class="scrollarea">
          <div class="content">
            <div class="five">
              {#each week as d}
                <section class="day">
                  <h3 class={d.tone} class:wide={d.wide}>{d.name}{#each d.emojis as e}{@render emoji(e)}{/each}</h3>
                  <hr />
                  <p>Les tâches importantes</p>
                  {#each tasks as t, i}{@render todo(`${d.id}-${i}`, t)}{/each}
                  {@render toggles()}
                </section>
              {/each}
            </div>
            <div class="five second">
              {#each weekend as d, k}
                <section class="day" class:barred={k === 2}>
                  <h3 class={d.tone}>{d.name}{#each d.emojis as e}{@render emoji(e)}{/each}</h3>
                  <hr />
                  <p>{#each d.intro as line, j}{#if j}<br />{/if}{line}{/each}</p>
                  {#each tasks as t, i}{@render todo(`${d.id}-${i}`, t)}{/each}
                  {#if d.toggles}{@render toggles()}{/if}
                </section>
              {/each}
              <section class="day">
                <h3 class="free">TEMPS LIBRE</h3>
                <hr />
                <p>Qu’est-ce que j’attends avec<br />impatience pour ce we ?</p>
                <blockquote>Enter fun thing here</blockquote>
              </section>
            </div>
            <hr class="rule" />
            <div class="three">
              <section>
                <h3>Réflexion de la semaine</h3>
                <ul><li>productivité</li><li>émotions</li><li>décris ta semaine en 3 mots</li></ul>
              </section>
              <section>
                <h3>Semaine prochaine</h3>
                {#each [1, 2, 3] as i}{@render todo(`sp-${i}`, 'To-do')}{/each}
              </section>
              <section>
                <h3>Mois prochain</h3>
                {#each [1, 2, 3] as i}{@render todo(`mp-${i}`, 'To-do')}{/each}
              </section>
            </div>
          </div>
          <div class="mbar"><i></i></div>
        </div>
        <button class="helpbtn">?</button>
      </main>
    </div>

    <footer class="dock">
      {#each dock as d}
        <button class="app" class:active={d.active} aria-label={d.label}>{@render app(d.icon)}{#if d.running}<i></i>{/if}</button>
      {/each}
      <button class="apps" aria-label="Applications">
        <svg viewBox="0 0 26 24" aria-hidden="true">
          {#each [0, 10, 20] as x}{#each [0, 9, 18] as y}<rect {x} {y} width="5" height="5" rx="1.500" fill="#fff" />{/each}{/each}
        </svg>
      </button>
    </footer>
  </section>
</div>

<style>
  :global(body) { margin: 0; background: #fff; }
  .desktop { display: flex; height: 100vh; overflow: hidden; }
  .desktop :global(*) { box-sizing: border-box; }
  button { font: inherit; color: inherit; background: none; border: 0; padding: 0; margin: 0; text-align: left; }
  a { color: inherit; text-decoration: none; }
  h1, h2, h3, p, ul, blockquote { margin: 0; padding: 0; }
  .ic { width: 16px; height: 16px; flex: none; display: block; }

  /* document viewer */
  .viewer { flex: 1 1 0; min-width: 0; display: flex; flex-direction: column; background: #383838; font-family: "Noto Sans", sans-serif; color: #d0d0d0; }
  .vhead { display: grid; grid-template-columns: 1fr auto 1fr; align-items: center; height: 48px; padding: 0 13px 2px 6px; background: #3d3d3d; border-top: 2px solid #4a4a4a; border-bottom: 1px solid #222; }
  .vleft, .vright { display: flex; gap: 6px; align-items: center; }
  .vright { justify-content: flex-end; }
  .vbtn, .zoom, .pager { height: 34px; border: 1px solid #262626; border-radius: 5px; display: flex; align-items: center; justify-content: center; background: #404040; color: #b4b4b4; }
  .vbtn { width: 36px; }
  .vbtn.pressed, .seg .pressed { background: #303030; }
  .pager { width: 91px; justify-content: flex-start; font-size: 14px; color: #777; background: #363636; }
  .pager input { width: 33px; height: 32px; padding: 0 8px 0 0; text-align: right; font: inherit; color: #eee; background: none; border: 0; border-right: 1px solid #262626; }
  .pager span { padding-left: 9px; }
  .vtitle { text-align: center; font-size: 14px; line-height: 16px; }
  .vtitle h1 { font-size: 14px; line-height: 16px; font-weight: 700; color: #a6a6a6; }
  .vtitle p { font-size: 12px; color: #777; line-height: 16px; }
  .zoom { width: 90px; font-size: 14px; gap: 8px; background: #363636; color: #d8d8d8; }
  .zoom .ic { width: 10px; height: 10px; color: #999; }
  .vwin { display: flex; gap: 20px; align-items: center; padding-left: 14px; }
  .vwin button { width: 20px; height: 20px; display: grid; place-items: center; }
  .vwin .ic { width: 9px; height: 9px; }
  .vclose { border-radius: 10px; background: #5a5a5a; color: #fff; }
  .vbody { flex: 1; min-height: 0; display: flex; padding-right: 8px; }
  .thumbs { width: 158px; flex: none; display: flex; flex-direction: column; border-right: 9px solid #3a3a3a; background: #363636; box-shadow: inset -1px 0 #242424; }
  .thumblist { flex: 1; padding: 5px 6px; }
  .thumb { display: block; width: 114px; padding: 6px; margin-bottom: 6px; border-radius: 4px; text-align: center; font-size: 14px; font-style: italic; color: #d8d8d8; }
  .thumb svg { display: block; width: 102px; height: 143px; border-top: 1px solid #000; border-bottom: 1px solid #000; }
  .thumb span { display: block; height: 21px; line-height: 22px; }
  .thumb.current { background: #e04b16; }
  .tt { font: 700 5px "Noto Sans", sans-serif; fill: #7451eb; text-anchor: middle; }
  .thumbbar { height: 46px; padding: 6px; background: #3d3d3d; }
  .seg { display: flex; width: 136px; height: 34px; border: 1px solid #262626; border-radius: 5px; overflow: hidden; }
  .seg button { flex: 1; display: grid; place-items: center; color: #b4b4b4; border-right: 1px solid #2a2a2a; }
  .seg button:last-child { border: 0; }
  .page { flex: 1; min-width: 0; overflow: hidden; background: #fff; padding: 0 207px 0 208px; font-family: Inter, sans-serif; white-space: nowrap; box-shadow: inset 0 2px 2px #aaa; }
  .panel { background: #ececec; }
  .first { padding: 83px 32px 29px 26px; }
  .banner { display: flex; align-items: center; gap: 22px; width: 797px; height: 70px; padding-left: 25px; background: #1c3861; color: #fff; font-size: 38px; font-weight: 700; }
  .banner b { font-size: 35px; font-weight: 600; padding-top: 6px; }
  .notice { display: flex; align-items: center; gap: 34px; margin-top: 21px; height: 129px; padding-left: 60px; background: #fff; color: #3c3c3c; font-size: 38px; line-height: 48px; }
  .notice svg { width: 56px; height: 56px; flex: none; }
  .question { padding: 44px 25px 18px; font-size: 38px; line-height: 43px; font-weight: 700; color: #1c3861; }
  .answer { padding: 50px 35px 60px; color: #000; font-size: 38px; line-height: 35px; font-weight: 300; }
  h2 { padding: 38px 20px 0; font-size: 47px; line-height: 60px; color: #7451eb; }

  /* desktop screen */
  .screen { flex: 1 1 0; min-width: 0; display: flex; flex-direction: column; background: #fff; font-family: "Noto Sans", sans-serif; font-size: 14px; color: #202124; }
  .topbar { height: 27px; flex: none; display: grid; grid-template-columns: 1fr auto 1fr; align-items: center; background: #1d1d1d; color: #f0f0f0; padding: 0 15px 0 12px; }
  .tleft, .appmenu, .clock, .tray { display: flex; align-items: center; }
  .tleft { gap: 38px; }
  .appmenu { gap: 6px; }
  .appmenu .ic:last-child, .tray .ic:last-child { width: 10px; height: 10px; }
  .clock { gap: 8px; padding-left: 22px; }
  .tray { justify-content: flex-end; gap: 14px; }
  .tray .ic:last-child { margin-left: 8px; }
  .tabbar { height: 34px; flex: none; display: flex; align-items: center; background: #b5e8f3; padding-right: 8px; }
  .tab { width: 239px; height: 34px; flex: none; display: flex; align-items: center; gap: 8px; padding: 0 10px 0 12px; border-right: 1px solid #7d9ba2; }
  .tab:first-child { width: 248px; padding-left: 20px; border: 0; }
  .tab.active { background: #fff; border: 0; border-radius: 9px 9px 0 0; }
  .tab > span { flex: 1; overflow: hidden; white-space: nowrap; mask-image: linear-gradient(to left, transparent, #000 24px); }
  .tab button .ic { width: 11px; height: 11px; }
  .tab:nth-child(n + 3) { height: 25px; }
  .newtab { padding-left: 16px; }
  .newtab .ic { width: 15px; height: 15px; }
  .winctl { margin-left: auto; display: flex; gap: 23px; color: #5f6368; }
  .winctl .ic { width: 11px; height: 11px; }
  .winctl .dark { color: #202124; padding-right: 4px; }
  .toolbar { height: 36px; flex: none; display: flex; align-items: center; padding: 2px 14px 0; }
  .nav { display: flex; gap: 16px; padding-right: 14px; }
  .off { color: #9aa0a6; }
  .omni { flex: 1; height: 30px; display: flex; align-items: center; gap: 9px; border-radius: 15px; background: #e0e0e0; padding: 0 10px; color: #5f6368; }
  .url { flex: 1; color: #202124; padding-right: 16px; }
  .url span { color: #5f6368; }
  .omni button { padding-left: 8px; }
  .exts { display: flex; align-items: center; gap: 16px; padding-left: 14px; }
  .me { width: 22px; height: 22px; margin: 0 -3px; border-radius: 11px; background: #0a87d2; color: #fff; font-size: 12px; text-align: center; }
  .bookmarks { height: 35px; flex: none; display: flex; align-items: center; gap: 19px; padding: 0 10px 2px 14px; border-bottom: 1px solid #c9c9c9; white-space: nowrap; }
  .bookmarks a { display: flex; align-items: center; gap: 8px; }
  .more { margin-left: auto; font-size: 18px; }
  .bookmarks .others { border-left: 1px solid #ccc; padding-left: 10px; margin-left: -4px; }

  /* workspace page */
  .notion { flex: 1; min-height: 0; display: flex; font-family: "Liberation Sans", Arial, sans-serif; color: #37352f; }
  .side { width: 240px; flex: none; display: flex; flex-direction: column; background: #fbfbfa; border-right: 1px solid #f0f0ef; color: #7b7a76; }
  .workspace { display: flex; align-items: center; gap: 8px; height: 44px; padding: 0 15px; color: #37352f; }
  .workspace b { font-weight: 400; width: 168px; overflow: hidden; text-overflow: ellipsis; white-space: nowrap; }
  .workspace .ic { width: 12px; height: 16px; margin-left: -6px; color: #9b9a97; }
  .badge { width: 20px; height: 20px; border-radius: 3px; background: #0a87d2; color: #fff; font-size: 13px; line-height: 20px; text-align: center; }
  .quick { padding: 0 17px; }
  .quick a { display: flex; align-items: center; gap: 12px; height: 28px; padding-top: 2px; }
  .quick .ic, .add .ic { color: #a3a29e; }
  .scroller { flex: 1; min-height: 0; display: flex; margin-top: 10px; overflow: hidden; }
  .treelist { flex: 1; min-width: 0; padding: 6px 4px 0; }
  .node { display: flex; align-items: center; height: 28px; padding-left: 10px; border-radius: 4px; }
  .node.sub { padding-left: 24px; }
  .node.selected { background: #f0f0ef; color: #37352f; font-weight: 700; }
  .chev .ic { width: 12px; height: 11px; color: #acaba8; }
  .nic { width: 28px; display: grid; place-items: center; }
  .nlabel { flex: 1; min-width: 0; overflow: hidden; text-overflow: ellipsis; white-space: nowrap; padding-right: 8px; }
  .add { display: flex; align-items: center; gap: 12px; height: 28px; padding-left: 11px; }
  .add .ic { width: 12px; height: 12px; }
  .tools { padding: 17px 13px 0; }
  .sbar { width: 10px; background: #edece9; }
  .sbar i { display: block; height: 98%; background: #d3d1cb; }
  .newpage { height: 47px; padding-left: 15px; border-top: 1px solid #e6e6e4; width: 100%; }
  main { flex: 1; min-width: 0; position: relative; display: flex; flex-direction: column; }
  .crumbs { height: 45px; flex: none; display: flex; align-items: center; padding: 0 15px 2px 16px; }
  .crumbs a { display: flex; gap: 8px; align-items: center; }
  .slash { color: #9b9a97; padding: 0 12px 0 4px; }
  .acts { margin-left: auto; display: flex; align-items: center; gap: 18px; }
  .acts > span { color: #a5a4a0; }
  .acts .ic { width: 18px; height: 18px; }
  .scrollarea { flex: 1; min-height: 0; display: flex; overflow: hidden; }
  .content { flex: 1; min-width: 0; padding: 16px 96px 0; font-size: 16px; line-height: 24px; }
  .mbar { width: 10px; flex: none; background: #edece9; }
  .mbar i { display: block; height: 34%; margin-top: 248px; background: #d3d1cb; }
  .five { display: grid; grid-template-columns: repeat(5, minmax(0, 1fr)); gap: 46px; }
  .second { margin-top: 111px; }
  .day { position: relative; white-space: nowrap; }
  .barred::before { content: ""; position: absolute; left: -25px; top: -35px; width: 4px; height: 291px; background: #dfdfde; }
  h3 { font-size: 24px; line-height: 31px; }
  .day h3 { height: 37px; padding: 3px 2px; display: flex; gap: 11px; align-items: center; margin: 0 0 8px; }
  .day h3.wide :global(.emoji:first-of-type) { margin-left: 13px; }
  .emoji { width: 24px; height: 24px; flex: none; }
  .blue { background: #e7f3f8; } .green { background: #edf3ec; } .violet { background: #f6f3f9; } .brown { background: #f4eeee; }
  .yellow { background: #fbf3db; } .orange { background: #fbecdd; } .pink { background: #faf1f5; } .red { background: #fdebec; }
  .free { color: #9065b0; }
  hr { border: 0; height: 1px; background: #dededd; margin: 0; }
  .day p { padding: 10px 2px 3px; }
  .todo { display: flex; align-items: center; gap: 8px; height: 32px; padding: 4px 6px 0; }
  .todo input { appearance: none; width: 16px; height: 16px; margin: 0; border: 1px solid #37352f; box-shadow: inset 0 0 0 1px #a6a5a1; background: #fff; flex: none; }
  .toggle { display: flex; align-items: center; gap: 12px; width: 100%; height: 30px; margin-bottom: 2px; padding-left: 8px; background: #f1f1ef; }
  .todo + .toggle { margin-top: 3px; }
  .toggle svg { width: 10px; height: 10px; fill: #37352f; }
  .empty svg { fill: #9b9a95; }
  blockquote { border-left: 3px solid #37352f; margin: 8px 2px; padding-left: 16px; }
  .rule { margin-top: 50px; }
  .three { display: grid; grid-template-columns: 666fr 388fr 332fr; gap: 46px; padding-top: 45px; }
  .three h3 { padding: 0 2px; margin-bottom: 4px; }
  ul { list-style: none; }
  li { display: flex; align-items: center; height: 32px; padding: 4px 0 0 12px; }
  li::before { content: ""; width: 5px; height: 6px; border-radius: 3px; background: #37352f; margin-right: 13px; }
  .helpbtn { position: absolute; right: 26px; bottom: 26px; width: 36px; height: 36px; border-radius: 18px; background: #fff; box-shadow: 0 0 0 1px #e3e3e2, 0 2px 4px #ddd; text-align: center; font-size: 20px; }
  .dock { height: 60px; flex: none; display: flex; align-items: center; gap: 8px; padding: 0 16px 0 4px; background: #22151f; }
  .app { position: relative; width: 56px; height: 56px; border-radius: 4px; display: grid; place-items: center; }
  .app.active { background: #4b3f48; }
  .app-ic { width: 40px; height: 40px; }
  .app i { position: absolute; left: 26px; bottom: 1px; width: 5px; height: 5px; border-radius: 3px; background: #e95420; }
  .apps { margin-left: auto; padding-right: 2px; }
  .apps svg { width: 26px; height: 24px; display: block; }
</style>
